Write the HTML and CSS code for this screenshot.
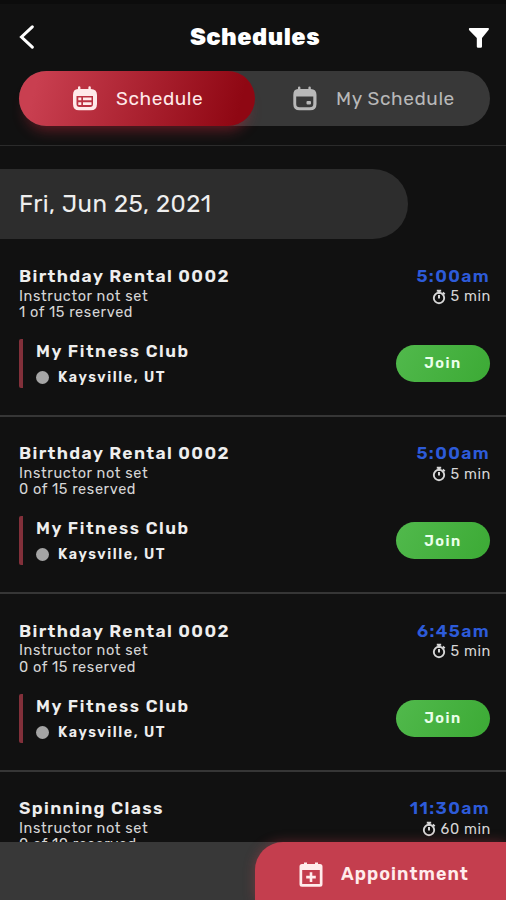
FILE: index.html
```html
<!DOCTYPE html>
<html lang="en">
<head>
  <meta charset="UTF-8" />
  <meta name="viewport" content="width=device-width, initial-scale=1.0" />
  <title>Schedules</title>
  <link rel="stylesheet" href="styles.css">
</head>
<body>
  <svg class="sprite" width="0" height="0">
    <symbol id="stopwatch" viewBox="0 0 14 16">
      <circle cx="7" cy="9" r="5.2" fill="none" stroke="currentColor" stroke-width="1.9" />
      <path d="M4.8 1.8h4.4M7 1.8v3M10.700 3.600l2 1.700M7 6v3.5" fill="none" stroke="currentColor" stroke-width="2" />
    </symbol>
  </svg>

  <div class="screen">
    <header class="header">
      <div class="title-bar">
        <svg class="back" viewBox="0 0 16 24"><path d="M13.3 1.8L2.5 12l10.8 10.2" /></svg>
        <h1>Schedules</h1>
        <svg class="filter" viewBox="0 0 22 20"><path d="M1.5 0h19q1 .8 0 2L14 10v8.5q0 1.2-1.3 1.2h-2.6q-1.3 0-1.3-1.2V10L1 2Q.5.6 1.5 0z" /></svg>
      </div>
      <div class="tabs">
        <div class="tab active">
          <svg class="tab-icon" viewBox="0 0 26 26">
            <path fill-rule="evenodd" d="M6 1.3q0-1.1 1.2-1.1t1.2 1.1V3h8V1.3q0-1.1 1.2-1.1t1.2 1.1V3q6.2 0 6.2 6v9q0 6.3-6.3 6.3H7Q1 24.3 1 18V9q0-6 5-6zM4.5 10v8q0 3 3 3H18q3 0 3-3v-8z" />
            <path d="M6.3 11.5h3v2.8h-3zM11 11.5h8.500v2.800H11zM6.300 16.200h3V19h-3zM11 16.200h8.500V19H11z" />
          </svg>
          <span>Schedule</span>
        </div>
        <div class="tab">
          <svg class="tab-icon" viewBox="0 0 26 26">
            <path fill-rule="evenodd" d="M6 1.500q0-1.100 1.200-1.100t1.200 1.100V3h8V1.500q0-1.100 1.200-1.100t1.200 1.100V3q5.700 0 5.700 6v9q0 6.300-6.300 6.300H7.500Q1.300 24.300 1.300 18V9q0-6 4.700-6zM4.200 10.500V18q0 3.300 3.300 3.300h10.300q3.500 0 3.500-3.300v-7.500z" />
            <rect x="14.500" y="15" width="4.500" height="3.500" rx="1" />
          </svg>
          <span>My Schedule</span>
        </div>
      </div>
    </header>

    <div class="date">Fri, Jun 25, 2021</div>

    <main class="list">
      <section class="item">
        <div class="row">
          <h2>Birthday Rental 0002</h2>
          <span class="time">5:00am</span>
        </div>
        <div class="row details">
          <div>
            <p>Instructor not set</p>
            <p>1 of 15 reserved</p>
          </div>
          <p class="duration"><svg class="watch"><use href="#stopwatch" /></svg>5 min</p>
        </div>
        <div class="row club">
          <div class="place">
            <h3>My Fitness Club</h3>
            <p class="city">Kaysville, UT</p>
          </div>
          <button class="join">Join</button>
        </div>
      </section>

      <section class="item">
        <div class="row">
          <h2>Birthday Rental 0002</h2>
          <span class="time">5:00am</span>
        </div>
        <div class="row details">
          <div>
            <p>Instructor not set</p>
            <p>0 of 15 reserved</p>
          </div>
          <p class="duration"><svg class="watch"><use href="#stopwatch" /></svg>5 min</p>
        </div>
        <div class="row club">
          <div class="place">
            <h3>My Fitness Club</h3>
            <p class="city">Kaysville, UT</p>
          </div>
          <button class="join">Join</button>
        </div>
      </section>

      <section class="item">
        <div class="row">
          <h2>Birthday Rental 0002</h2>
          <span class="time">6:45am</span>
        </div>
        <div class="row details">
          <div>
            <p>Instructor not set</p>
            <p>0 of 15 reserved</p>
          </div>
          <p class="duration"><svg class="watch"><use href="#stopwatch" /></svg>5 min</p>
        </div>
        <div class="row club">
          <div class="place">
            <h3>My Fitness Club</h3>
            <p class="city">Kaysville, UT</p>
          </div>
          <button class="join">Join</button>
        </div>
      </section>

      <section class="item">
        <div class="row">
          <h2>Spinning Class</h2>
          <span class="time">11:30am</span>
        </div>
        <div class="row details">
          <div>
            <p>Instructor not set</p>
            <p>0 of 10 reserved</p>
          </div>
          <p class="duration"><svg class="watch"><use href="#stopwatch" /></svg>60 min</p>
        </div>
      </section>
    </main>

    <footer class="bottom-bar">
      <div class="appointment">
        <svg class="plus" viewBox="0 0 24 26">
          <path fill-rule="evenodd" d="M5 2V.5h3V2h8V.5h3V2h2q2.500 0 2.500 2.500v17.800q0 2.500-2.500 2.500H3Q.5 24.800.5 22.300V4.500Q.5 2 3 2zM3.200 8v14h17.600V8z" />
          <path d="M10.700 10.300h2.600v3.500h3.500v2.600h-3.500v3.500h-2.600v-3.500H7.200v-2.600h3.500z" />
        </svg>
        <span>Appointment</span>
      </div>
    </footer>
  </div>
</body>
</html>
```
FILE: styles.css
```css
* {
  margin: 0;
  padding: 0;
  box-sizing: border-box;
}

body {
  background-color: #111;
  color: #eee;
  font-family: Rubik, Inter, Roboto, sans-serif;
}

.sprite {
  display: none;
}

.screen {
  height: 900px;
  display: flex;
  flex-direction: column;
  overflow: hidden;
  border-top: 4px solid #0c0c0c;
}

.header {
  flex: none;
  height: 142px;
  padding: 18px 16px 0 19px;
  border-bottom: 1px solid #2b2b2b;
}

.title-bar {
  height: 49px;
  display: flex;
  align-items: flex-start;
  justify-content: space-between;
}

h1 {
  margin-left: 7px;
  color: #fff;
  font-size: 23.5px;
  font-weight: 800;
  line-height: 31px;
  letter-spacing: 0.5px;
}

.back {
  width: 16px;
  height: 24px;
  margin-top: 3px;
  fill: none;
  stroke: #fff;
  stroke-width: 3px;
  stroke-linecap: round;
}

.filter {
  width: 22px;
  height: 20px;
  margin-top: 6px;
  fill: #fff;
}

.tabs {
  display: flex;
  height: 55px;
  border-radius: 28px;
  background-color: #383838;
}

.tab {
  flex: 1;
  display: flex;
  align-items: center;
  padding-left: 37px;
  color: #b8b8b8;
  font-size: 19px;
  letter-spacing: 0.6px;
}

.tab.active {
  flex: none;
  width: 236px;
  padding-left: 53px;
  border-radius: 28px;
  background: linear-gradient(105deg, #c93f50 8%, #8f0713 92%);
  box-shadow: 0 11px 14px -7px rgba(200, 40, 60, 0.45);
  color: #ffe9e9;
}

.tab span {
  padding-bottom: 1px;
}

.tab-icon {
  width: 26px;
  height: 26px;
  margin-right: 18px;
  fill: currentColor;
}

.date {
  flex: none;
  width: 408px;
  height: 70px;
  margin-top: 23px;
  padding-left: 19px;
  border-radius: 0 35px 35px 0;
  background-color: #2d2d2d;
  font-size: 24px;
  line-height: 70px;
  letter-spacing: 0.5px;
}

.list {
  flex: 1;
  min-height: 0;
  padding-top: 0.6px;
  overflow: hidden;
}

.item {
  height: 177.4px;
  padding: 26.4px 16px 0 19px;
  border-bottom: 2px solid #363636;
}

.row {
  display: flex;
  justify-content: space-between;
}

h2,
.time {
  font-size: 17.5px;
  font-weight: 600;
  line-height: 21px;
  letter-spacing: 1.35px;
}

.time {
  color: #2d5bd9;
}

.details {
  height: 33px;
  padding-top: 0.6px;
  color: #d6d6d6;
  font-size: 14.5px;
  line-height: 16.5px;
  letter-spacing: 0.62px;
}

.duration {
  display: flex;
  align-items: center;
  height: 18px;
  margin-right: -1px;
}

.watch {
  width: 14px;
  height: 16px;
  margin-right: 5px;
}

.club {
  height: 49px;
  margin-top: 19px;
}

.place {
  padding-left: 13px;
  border-left: 4px solid #82303a;
  border-radius: 2px;
}

h3 {
  font-size: 17px;
  font-weight: 600;
  line-height: 25px;
  letter-spacing: 1.55px;
}

.city {
  display: flex;
  align-items: center;
  height: 27px;
  font-size: 14.3px;
  font-weight: 600;
  letter-spacing: 1.6px;
}

.city::before {
  content: "";
  width: 13px;
  height: 13px;
  margin-right: 9px;
  border-radius: 50%;
  background-color: #a5a5a5;
}

.join {
  width: 94px;
  height: 37px;
  margin-top: 6px;
  border: none;
  border-radius: 19px;
  background: linear-gradient(120deg, #51b94c, #3caa35);
  color: #eaffea;
  font: inherit;
  font-size: 14.5px;
  font-weight: 600;
  letter-spacing: 1.5px;
}

.bottom-bar {
  flex: none;
  display: flex;
  justify-content: flex-end;
  height: 58px;
  background-color: #383838;
}

.appointment {
  display: flex;
  align-items: center;
  width: 251px;
  padding: 7px 0 0 44px;
  border-radius: 28px 0 0 0;
  background-color: #c43e4e;
  box-shadow: 0 0 12px rgba(196, 62, 78, 0.4);
  color: #ffecec;
  font-size: 18px;
  font-weight: 600;
  letter-spacing: 1.05px;
}

.appointment span {
  padding-bottom: 1px;
}

.plus {
  width: 24px;
  height: 26px;
  margin-right: 18px;
  fill: currentColor;
}
```
